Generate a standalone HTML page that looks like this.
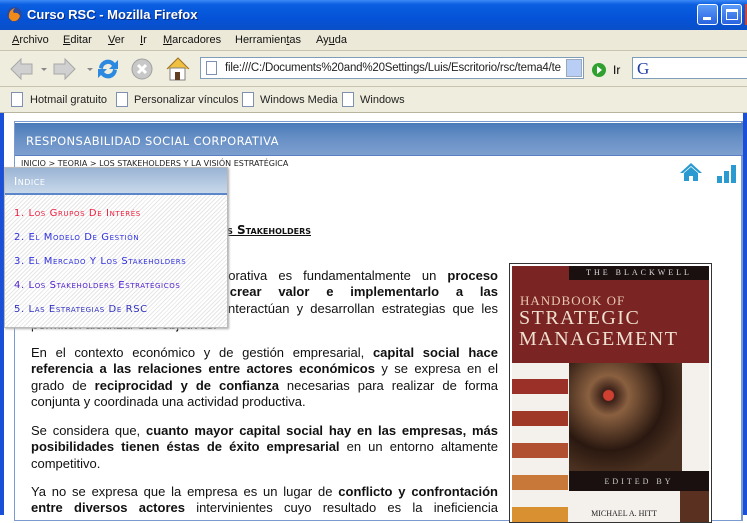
<!DOCTYPE html>
<html><head><meta charset="utf-8"><style>
*{margin:0;padding:0;box-sizing:border-box}
body{width:747px;height:515px;overflow:hidden;position:relative;background:#fff;font-family:"Liberation Sans",Arial,sans-serif}
.abs{position:absolute}
#title{left:0;top:0;width:747px;height:30px;background:linear-gradient(#3d8af7 0%,#0a5fe0 15%,#0553d8 60%,#0a4fc8 100%);}
#title span{position:absolute;left:27px;top:7px;color:#fff;font-weight:bold;font-size:13px;font-family:"Liberation Sans",sans-serif;text-shadow:1px 1px #0a2a80}
.wb{position:absolute;top:4px;width:21px;height:21px;border:1px solid #fff;border-radius:3px;background:linear-gradient(#5b9bf8,#2a63e0)}
#menu{left:0;top:30px;width:747px;height:21px;background:#ece9d8;border-bottom:1px solid #c8c4b0;font-size:11px;color:#111}
#menu span{position:absolute;top:4px}
#tool{left:0;top:51px;width:747px;height:36px;background:#efedde;border-bottom:1px solid #c8c4b0}
#bm{left:0;top:87px;width:747px;height:26px;background:#efedde;border-bottom:1px solid #b8b4a0;font-size:11px;color:#222}
#bm span{position:absolute;top:7px}
.pg{position:absolute;top:5px;width:12px;height:15px;border:1px solid #8090b0;background:#fff}
#left{left:0;top:113px;width:4px;height:402px;background:#1a4fd8}
#right{left:743px;top:113px;width:4px;height:402px;background:#1a4fd8}
#frame{left:14px;top:121px;width:729px;height:400px;border:1px solid #7a9ad0;border-right:2px solid #7a9ad0}
#hdr{left:15px;top:123px;width:728px;height:33px;background:linear-gradient(#4a7ab8,#6890c6 50%,#7d9fcf);border-bottom:1px solid #5a80c0}
#hdr span{position:absolute;left:11px;top:11px;color:#fff;letter-spacing:0.4px;font-family:"DejaVu Sans","Liberation Sans",sans-serif;font-size:11.5px}
#crumb{left:21px;top:159px;font-size:8px;color:#222;font-family:"DejaVu Sans",sans-serif}
#panel{left:4px;top:167px;width:224px;height:161px;border:1px solid #bbb;background:repeating-linear-gradient(135deg,#fff 0 2px,#e6e6e6 2px 3px);box-shadow:1px 1px 2px #aaa}
#ph{position:absolute;left:0;top:0;width:222px;height:27px;background:linear-gradient(#9ab4d4,#c8d8ea);border-bottom:2px solid #5c86c8}
#ph span{position:absolute;left:9px;top:7px;color:#fff;font-size:11px;font-variant:small-caps;letter-spacing:0.5px;font-family:"DejaVu Sans",sans-serif}
.it{position:absolute;left:9px;font-size:10px;font-variant:small-caps;font-family:"DejaVu Sans",sans-serif;letter-spacing:0.6px}
#h2{left:160px;top:223px;width:151px;text-align:right;font-size:12px;font-variant:small-caps;font-weight:bold;text-decoration:underline;font-family:"DejaVu Sans",sans-serif;color:#111}
.p{position:absolute;left:31px;width:467px;font-size:13px;line-height:16.3px;color:#111}
.p div{text-align:justify;text-align-last:justify;white-space:nowrap}
.p div.l{text-align-last:left}
#book{left:509px;top:263px;width:203px;height:260px;border:1px solid #333;background:#fff;overflow:hidden}
</style></head><body>
<div id="title" class="abs"><svg style="position:absolute;left:6px;top:6px" width="17" height="17"><circle cx="8.5" cy="8.5" r="7.5" fill="#2a4aa0"/><path d="M3 12 Q2 4 9 2 Q6 5 8 7 Q12 6 14 10 Q12 16 6 15 Z" fill="#f08a18"/></svg><span>Curso RSC - Mozilla Firefox</span>
<div class="wb" style="left:697px"><div style="position:absolute;left:5px;top:12px;width:8px;height:3px;background:#fff"></div></div>
<div class="wb" style="left:721px"><div style="position:absolute;left:4px;top:4px;width:12px;height:11px;border:1px solid #fff;border-top:3px solid #fff"></div></div>
<div style="position:absolute;left:745px;top:4px;width:4px;height:21px;background:#e04020"></div></div>
<div id="menu" class="abs"><span style="left:12px"><u>A</u>rchivo</span><span style="left:63px"><u>E</u>ditar</span><span style="left:108px"><u>V</u>er</span><span style="left:140px"><u>I</u>r</span><span style="left:163px"><u>M</u>arcadores</span><span style="left:235px">Herramien<u>t</u>as</span><span style="left:316px">Ay<u>u</u>da</span></div>
<div id="tool" class="abs">
<svg style="position:absolute;left:8px;top:5px" width="185" height="26"><path d="M3 13 L13 3 V8 H24 V18 H13 V23 Z" fill="#d0d0d0" stroke="#a8a8a8"/><path d="M33 12 l3 3 l3 -3z" fill="#888"/><path d="M67 13 L57 3 V8 H46 V18 H57 V23 Z" fill="#d0d0d0" stroke="#a8a8a8"/><path d="M79 12 l3 3 l3 -3z" fill="#888"/>
<path d="M91 12 A9 9 0 0 1 107 7 L110 4 V13 H101 L104 10 A5 5 0 0 0 95 13Z" fill="#2b8ae0"/><path d="M109 14 A9 9 0 0 1 93 19 L90 22 V13 H99 L96 16 A5 5 0 0 0 105 13Z" fill="#2b8ae0"/>
<circle cx="134" cy="13" r="10" fill="#c8c8c8" stroke="#a0a0a0"/><path d="M130 9 L138 17 M138 9 L130 17" stroke="#fff" stroke-width="3"/>
<path d="M159 13 L170 2 L181 13" fill="#f0c040" stroke="#a07020"/><rect x="162" y="12" width="15" height="12" fill="#fff" stroke="#808080"/><rect x="167" y="16" width="5" height="8" fill="#604020"/></svg>
<div style="position:absolute;left:200px;top:6px;width:384px;height:22px;border:1px solid #7f9db9;background:#fff;font-size:11.5px;color:#222"><div class="pg" style="left:5px;top:3px;height:14px;width:11px"></div><span style="position:absolute;left:24px;top:4px;letter-spacing:-0.2px">file:///C:/Documents%20and%20Settings/Luis/Escritorio/rsc/tema4/te</span><div style="position:absolute;right:1px;top:1px;width:16px;height:18px;background:#b8cef4;border:1px solid #9ab"></div></div>
<svg style="position:absolute;left:591px;top:11px" width="16" height="16"><circle cx="8" cy="8" r="7" fill="#30a030"/><path d="M6 4 L11 8 L6 12Z" fill="#fff"/></svg><span style="position:absolute;left:613px;top:12px;font-size:12px">Ir</span>
<div style="position:absolute;left:632px;top:6px;width:120px;height:22px;border:1px solid #7f9db9;background:#fff"><span style="position:absolute;left:4px;top:1px;font-size:17px;color:#1a3aa0;font-family:'Liberation Serif',serif">G</span></div></div>
<div id="bm" class="abs"><div class="pg" style="left:11px"></div><span style="left:30px">Hotmail gratuito</span><div class="pg" style="left:116px"></div><span style="left:134px">Personalizar vínculos</span><div class="pg" style="left:242px"></div><span style="left:260px">Windows Media</span><div class="pg" style="left:342px"></div><span style="left:360px">Windows</span></div>
<div id="left" class="abs"></div><div id="right" class="abs"></div>
<div id="frame" class="abs"></div>
<div id="hdr" class="abs"><span>RESPONSABILIDAD SOCIAL CORPORATIVA</span></div>
<div id="crumb" class="abs">INICIO &gt; TEORIA &gt; LOS STAKEHOLDERS Y LA VISIÓN ESTRATÉGICA</div>
<svg class="abs" style="left:679px;top:161px" width="24" height="24"><path d="M1 12 L12 2 L23 12 L20 12 L12 5 L4 12Z" fill="#2a9ad0"/><path d="M5 12 L12 6 L19 12 V20 H14 V15 H10 V20 H5Z" fill="#2a9ad0"/></svg>
<svg class="abs" style="left:716px;top:163px" width="22" height="22"><rect x="1" y="13" width="5" height="7" fill="#2a9ad0"/><rect x="8" y="8" width="5" height="12" fill="#2a9ad0"/><rect x="15" y="2" width="5" height="18" fill="#2a9ad0"/></svg>
<div id="h2" class="abs">Los Stakeholders</div>
<div class="p" style="top:268px"><div>La responsabilidad social corporativa es fundamentalmente un <b>proceso</b></div><div>que tiene como <b>objetivo crear valor e implementarlo a las</b></div><div>relaciones con los grupos que interactúan y desarrollan estrategias que les</div><div class="l">permiten alcanzar sus objetivos.</div></div>
<div class="p" style="top:345px"><div>En el contexto económico y de gestión empresarial, <b>capital social hace</b></div><div><b>referencia a las relaciones entre actores económicos</b> y se expresa en el</div><div>grado de <b>reciprocidad y de confianza</b> necesarias para realizar de forma</div><div class="l">conjunta y coordinada una actividad productiva.</div></div>
<div class="p" style="top:423px"><div>Se considera que, <b>cuanto mayor capital social hay en las empresas, más</b></div><div><b>posibilidades tienen éstas de éxito empresarial</b> en un entorno altamente</div><div class="l">competitivo.</div></div>
<div class="p" style="top:484px"><div>Ya no se expresa que la empresa es un lugar de <b>conflicto y confrontación</b></div><div><b>entre diversos actores</b> intervinientes cuyo resultado es la ineficiencia</div></div>
<div id="panel" class="abs"><div id="ph"><span>Indice</span></div>
<div class="it" style="top:40px;color:#f02040">1. Los Grupos De Interés</div>
<div class="it" style="top:64px;color:#3030e0">2. El Modelo De Gestión</div>
<div class="it" style="top:88px;color:#3030e0">3. El Mercado Y Los Stakeholders</div>
<div class="it" style="top:112px;color:#5020d0">4. Los Stakeholders Estratégicos</div>
<div class="it" style="top:136px;color:#3030c0">5. Las Estrategias De RSC</div></div>
<div id="book" class="abs">
<div style="position:absolute;left:2px;top:2px;width:197px;height:97px;background:#7a2424"></div>
<div style="position:absolute;left:59px;top:2px;width:140px;height:14px;background:#1a1010;color:#ddd;font-size:8px;letter-spacing:3px;text-align:center;font-family:'Liberation Serif',serif;padding-top:2px">THE BLACKWELL</div>
<div style="position:absolute;left:10px;top:30px;color:#e8c8b0;font-family:'Liberation Serif',serif;font-size:13px;letter-spacing:1px;line-height:14px">HANDBOOK OF</div>
<div style="position:absolute;left:9px;top:44px;color:#f0e0d0;font-family:'Liberation Serif',serif;font-size:20px;letter-spacing:1.5px;line-height:21px">STRATEGIC<br>MANAGEMENT</div>
<div style="position:absolute;left:2px;top:99px;width:197px;height:160px;background:#f4f0ec"></div>
<div style="position:absolute;left:2px;top:115px;width:56px;height:15px;background:#9a3028"></div>
<div style="position:absolute;left:2px;top:147px;width:56px;height:15px;background:#a03828"></div>
<div style="position:absolute;left:2px;top:179px;width:56px;height:15px;background:#b05030"></div>
<div style="position:absolute;left:2px;top:211px;width:56px;height:15px;background:#c87838"></div>
<div style="position:absolute;left:2px;top:243px;width:56px;height:15px;background:#d89030"></div>
<div style="position:absolute;left:59px;top:99px;width:113px;height:108px;background:radial-gradient(circle at 35% 30%,#d04030 0 5px,#3a2018 6px,#8a6040 20px,#2a1810 55px,#4a3020 80px)"></div>
<div style="position:absolute;left:59px;top:207px;width:140px;height:20px;background:#1a1010;color:#ccc;font-size:8px;letter-spacing:3px;text-align:center;padding-top:6px;font-family:'Liberation Serif',serif">EDITED BY</div>
<div style="position:absolute;left:59px;top:227px;width:110px;height:33px;color:#222;font-size:8px;text-align:center;padding-top:18px;font-family:'Liberation Serif',serif">MICHAEL A. HITT</div>
<div style="position:absolute;left:170px;top:227px;width:29px;height:33px;background:#5a3020"></div>
</div>
</body></html>
